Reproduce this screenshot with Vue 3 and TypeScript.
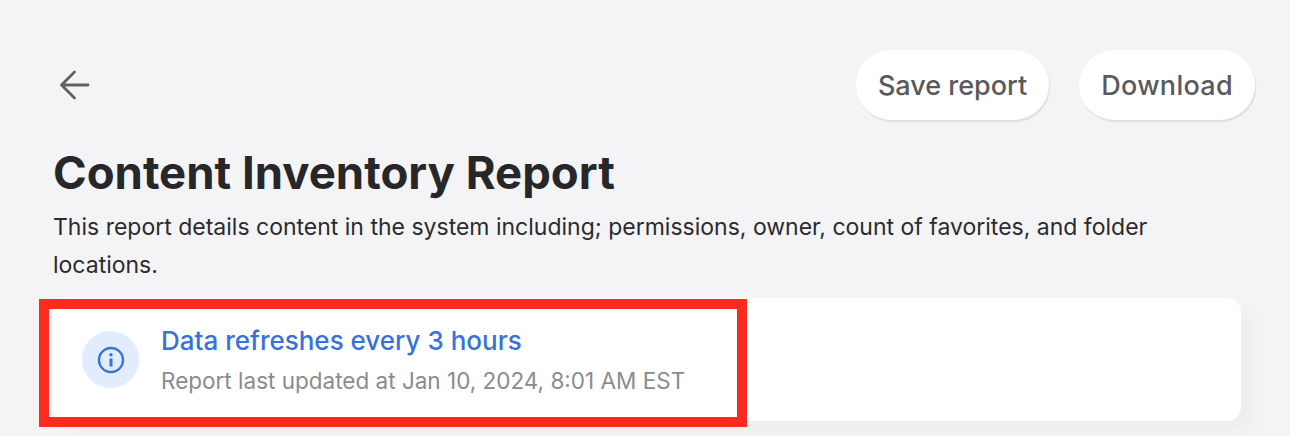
<script setup lang="ts">
const title = "Content Inventory Report";
const description =
  "This report details content in the system including; permissions, owner, count of favorites, and folder locations.";
</script>

<template>
  <div class="page">
    <div class="top-bar">
      <button class="back" aria-label="Back">
        <svg width="32" height="32" viewBox="0 0 32 32" fill="none">
          <path
            d="M29 16H3M15.5 3L2.5 16l13 13"
            stroke="#5f6062"
            stroke-width="2.8"
            stroke-linecap="round"
            stroke-linejoin="round"
          />
        </svg>
      </button>
      <div class="actions">
        <button class="pill">Save report</button>
        <button class="pill pill-download">Download</button>
      </div>
    </div>

    <h1 class="title">{{ title }}</h1>
    <p class="description">{{ description }}</p>

    <div class="card">
      <div class="highlight"></div>
      <div class="info-icon">
        <svg width="28" height="28" viewBox="0 0 28 28" fill="none">
          <circle cx="14" cy="14" r="12" stroke="#3871d9" stroke-width="2.4" />
          <circle cx="14" cy="8.8" r="1.7" fill="#3871d9" />
          <path d="M14 12.5v8" stroke="#3871d9" stroke-width="3" />
        </svg>
      </div>
      <div class="card-text">
        <div class="card-title">Data refreshes every 3 hours</div>
        <div class="card-sub">Report last updated at Jan 10, 2024, 8:01 AM EST</div>
      </div>
    </div>
  </div>
</template>

<style scoped>
.page {
  width: 1290px;
  height: 436px;
  box-sizing: border-box;
  padding: 50px 35px 0 53px;
  background: #f4f4f7;
  overflow: hidden;
  font-family: "Inter", "Liberation Sans", sans-serif;
}

.top-bar {
  display: flex;
  align-items: center;
  justify-content: space-between;
}

.back {
  display: flex;
  padding: 0;
  margin: 0 0 0 6px;
  border: none;
  background: none;
}

.actions {
  display: flex;
  gap: 30px;
}

.pill {
  height: 70px;
  padding: 0 22px;
  border: none;
  border-radius: 36px;
  background: #fff;
  box-shadow: 1px 2px 1px #dedee0;
  color: #5a5a5c;
  font: 500 27px "Inter", sans-serif;
}

.pill-download {
  letter-spacing: 0.3px;
}

.title {
  margin: 25px 0 0;
  color: #27272a;
  font-size: 45.5px;
  line-height: 56px;
  font-weight: 700;
}

.description {
  margin: 8px 0 0;
  width: 1130px;
  color: #2b2b2e;
  font-size: 23px;
  line-height: 37.5px;
}

.card {
  position: relative;
  display: flex;
  align-items: center;
  gap: 22px;
  width: 1188px;
  height: 123px;
  margin-top: 14px;
  padding-left: 29px;
  box-sizing: border-box;
  border-radius: 14px;
  background: #fff;
  box-shadow: 12px 12px 14px #eeeef0;
}

.highlight {
  position: absolute;
  left: -14px;
  top: 1px;
  width: 708px;
  height: 128px;
  box-sizing: border-box;
  border: 10px solid #ff2a1f;
}

.info-icon {
  display: flex;
  align-items: center;
  justify-content: center;
  width: 57px;
  height: 57px;
  border-radius: 50%;
  background: #e1edfd;
}

.card-title {
  color: #3871d9;
  font-size: 26px;
  line-height: 38px;
  font-weight: 500;
}

.card-sub {
  margin-top: 4px;
  color: #8b8b8e;
  font-size: 22.5px;
  line-height: 34px;
}
</style>
